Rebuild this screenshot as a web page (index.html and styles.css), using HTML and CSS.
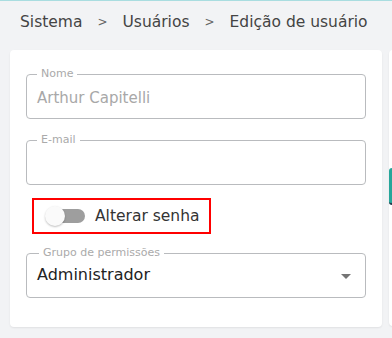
FILE: index.html
```html
<!DOCTYPE html>
<html lang="pt">
<head>
    <meta charset="UTF-8">
    <meta name="viewport" content="width=device-width, initial-scale=1.0">
    <title>Edição de usuário</title>
    <link rel="stylesheet" href="styles.css">
</head>
<body>
    <div class="topbar"></div>

    <div class="breadcrumb">
        <span>Sistema</span>
        <span class="sep">&gt;</span>
        <span>Usuários</span>
        <span class="sep">&gt;</span>
        <span>Edição de usuário</span>
    </div>

    <div class="content">
        <div class="card">
            <div class="field disabled">
                <span class="field-label">Nome</span>
                <span class="field-value">Arthur Capitelli</span>
            </div>

            <div class="field">
                <span class="field-label">E-mail</span>
                <span class="field-value"></span>
            </div>

            <div class="toggle-row">
                <div class="switch">
                    <div class="switch-track"></div>
                    <div class="switch-knob"></div>
                </div>
                <span class="toggle-label">Alterar senha</span>
            </div>

            <div class="field select">
                <span class="field-label">Grupo de permissões</span>
                <span class="field-value">Administrador</span>
                <span class="caret"></span>
            </div>
        </div>

        <div class="side-card">
            <div class="side-button"></div>
        </div>
    </div>
</body>
</html>
```

FILE: styles.css
```css
:root {
    --teal: #26a69a;
    --background-color: #f2f3f5;
    --border-color: #b9bbbe;
}

* {
    box-sizing: border-box;
}

body {
    margin: 0;
    padding: 0;
    font-family: 'DejaVu Sans', 'Noto Sans', sans-serif;
    background: var(--background-color);
    height: 100vh;
    overflow: hidden;
}

.topbar {
    height: 1px;
    background: #a9dde0;
}

.breadcrumb {
    display: flex;
    align-items: center;
    padding: 10px 20px 0;
    height: 31px;
    font-size: 15.5px;
    color: #444;
    white-space: nowrap;
}

.breadcrumb .sep {
    font-size: 12px;
    color: #666;
    margin: 0 15px;
}

.content {
    display: flex;
    align-items: flex-start;
    gap: 7px;
    padding: 18px 0 0 10px;
}

.card {
    flex: 0 0 372px;
    background: white;
    border-radius: 4px;
    box-shadow: 0 1px 2px rgba(0, 0, 0, 0.08);
    padding: 24px 16px 29px;
    display: flex;
    flex-direction: column;
}

.field {
    position: relative;
    height: 45px;
    border: 1px solid var(--border-color);
    border-radius: 4px;
    display: flex;
    align-items: center;
    padding: 0 10px;
}

.field + .field {
    margin-top: 21px;
}

.field-label {
    position: absolute;
    top: -8px;
    left: 10px;
    padding: 0 4px;
    background: white;
    font-size: 11px;
    line-height: 14px;
    color: #aaa;
}

.field-value {
    font-size: 15px;
    color: #222;
    padding-top: 3px;
}

.field.disabled .field-value {
    color: #a8a8a8;
}

.field.select {
    margin-top: 19px;
}

.field.select .field-label {
    left: 12px;
}

.field.select .field-value {
    font-size: 16px;
    padding-top: 0;
    margin-top: -2px;
}

.caret {
    position: absolute;
    right: 14px;
    top: 20px;
    width: 0;
    height: 0;
    border-left: 5px solid transparent;
    border-right: 5px solid transparent;
    border-top: 5px solid #757575;
}

.toggle-row {
    align-self: flex-start;
    display: flex;
    align-items: center;
    gap: 10px;
    margin: 13px 0 0 6px;
    padding: 0 10px 0 11px;
    height: 36px;
    border: 2px solid #ff0000;
}

.switch {
    position: relative;
    width: 40px;
    height: 20px;
}

.switch-track {
    position: absolute;
    left: 4px;
    right: 0;
    top: 3px;
    height: 14px;
    border-radius: 7px;
    background: #9e9e9e;
}

.switch-knob {
    position: absolute;
    left: 0;
    top: 0;
    width: 20px;
    height: 20px;
    border-radius: 50%;
    background: #fafafa;
    box-shadow: 0 1px 2px rgba(0, 0, 0, 0.25);
}

.toggle-label {
    font-size: 15.5px;
    color: #333;
}

.side-card {
    flex: 0 0 40px;
    height: 276px;
    background: white;
    border-radius: 4px;
    box-shadow: 0 1px 2px rgba(0, 0, 0, 0.08);
    padding-top: 118px;
}

.side-button {
    width: 40px;
    height: 37px;
    background: var(--teal);
    border-bottom: 2px solid #1f3b4d;
    border-radius: 3px 0 0 3px;
}
```
